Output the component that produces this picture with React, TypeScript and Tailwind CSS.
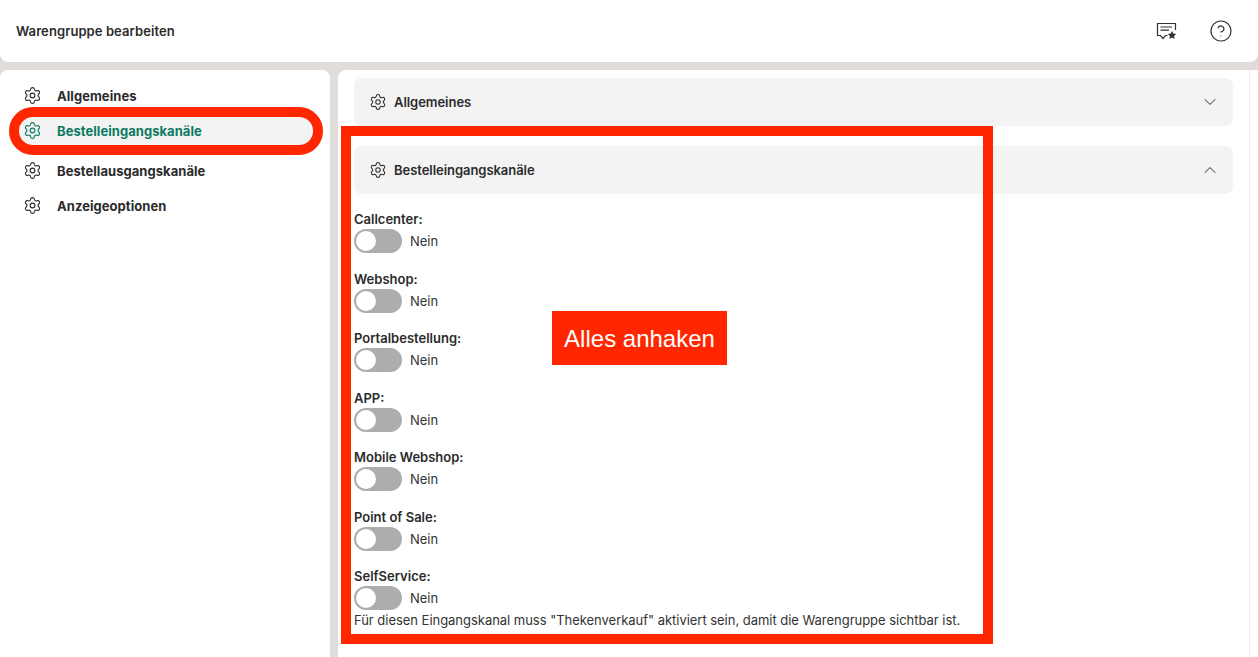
import { ChevronDown, ChevronUp, CircleHelp, Settings } from "lucide-react";

const NAV_ITEMS = [
  { label: "Allgemeines", className: "h-[35px]" },
  { label: "Bestelleingangskanäle", className: "h-[35px] mx-[19px] pl-[4px] bg-[#f3f3f3] rounded-full text-[#0b7a62]", active: true },
  { label: "Bestellausgangskanäle", className: "h-[35px] mt-[5px]" },
  { label: "Anzeigeoptionen", className: "h-[35px]" },
];

const CHANNELS = ["Callcenter", "Webshop", "Portalbestellung", "APP", "Mobile Webshop", "Point of Sale", "SelfService"];

function FeedbackIcon() {
  return (
    <svg width="22" height="20" viewBox="0 0 22 20" fill="none" stroke="#333" strokeWidth="1.2">
      <path d="M19.5 9V2.5H1.5V14.5H4.5L7 17.5L9.5 14.5H11.5" />
      <path d="M4.5 6H16M4.5 9.2H13" />
      <path d="M16 10L17.3 12.6L20.2 13L18.1 15L18.6 17.9L16 16.5L13.4 17.9L13.9 15L11.8 13L14.7 12.6Z" fill="#333" stroke="none" />
    </svg>
  );
}

function Toggle() {
  return (
    <div className="flex items-center gap-2">
      <div className="w-12 h-6 rounded-full bg-[#adadad] flex items-center pl-[2px]">
        <div className="w-5 h-5 rounded-full bg-white" />
      </div>
      <span className="pt-[2px] text-[13px] text-[#333]">Nein</span>
    </div>
  );
}

function AccordionHead({ title, open }: { title: string; open?: boolean }) {
  return (
    <div className="h-12 rounded-lg bg-[#f3f3f3] flex items-center pl-[15px] pr-[13px] text-[#2b2b2b]">
      <Settings size={18} strokeWidth={1.4} />
      <span className="ml-[7px] pt-[2px] text-[13px] font-semibold tracking-[-0.05px]">{title}</span>
      <span className="ml-auto">
        {open ? <ChevronUp size={20} strokeWidth={1.2} /> : <ChevronDown size={20} strokeWidth={1.2} />}
      </span>
    </div>
  );
}

export default function App() {
  return (
    <div className="relative w-[1258px] h-[657px] overflow-hidden bg-[#e0dcda] font-['Inter',sans-serif] text-[#2b2b2b]">
      <header className="h-[62px] bg-white rounded-b-lg flex items-center pl-4 pr-[25px]">
        <h1 className="pt-[2px] text-[13px] font-semibold tracking-[0.08px]">Warengruppe bearbeiten</h1>
        <div className="ml-auto flex items-center gap-[31px]">
          <FeedbackIcon />
          <CircleHelp size={24} strokeWidth={1.2} className="text-[#333]" />
        </div>
      </header>

      <div className="flex gap-2 mt-2 h-[587px]">
        <aside className="w-[330px] bg-white rounded-tr-lg rounded-tl-lg pt-[9px]">
          {NAV_ITEMS.map((item) => (
            <div key={item.label} className={`flex items-center ${item.active ? "" : "pl-[23px]"} ${item.className}`}>
              <Settings size={19} strokeWidth={1.4} className="shrink-0 -mt-[2px]" />
              <span className="ml-[15px] text-[13px] font-bold tracking-[0.05px]">{item.label}</span>
            </div>
          ))}
        </aside>

        <main className="flex-1 bg-white rounded-tl-lg flex">
          <div className="flex-1 pt-2 pl-4 pr-4">
            <AccordionHead title="Allgemeines" />
            <div className="mt-5">
              <AccordionHead title="Bestelleingangskanäle" open />
            </div>
            <div className="mt-[15px]">
              {CHANNELS.map((channel) => (
                <div key={channel} className="h-[59.5px]">
                  <div className="text-[13px] leading-5 font-semibold">{channel}:</div>
                  <Toggle />
                </div>
              ))}
            </div>
            <p className="-mt-[15.5px] text-[13px] leading-5 text-[#333] tracking-[-0.03px]">
              Für diesen Eingangskanal muss "Thekenverkauf" aktiviert sein, damit die Warengruppe sichtbar ist.
            </p>
          </div>
          <div className="w-[9px] border-l border-[#ececec]" />
        </main>
      </div>

      {/* Annotations over the screenshot */}
      <div className="absolute left-[9px] top-[107px] w-[314px] h-[48px] rounded-full border-[10px] border-[#ff2600]" />
      <div className="absolute left-[341px] top-[126px] w-[652px] h-[518px] border-[10px] border-[#ff2600]" />
      <div className="absolute left-[552px] top-[311px] w-[175px] h-[54px] bg-[#ff2600] text-white text-[24px] pt-[2px] flex items-center justify-center font-['Liberation_Sans',sans-serif]">
        Alles anhaken
      </div>
    </div>
  );
}
